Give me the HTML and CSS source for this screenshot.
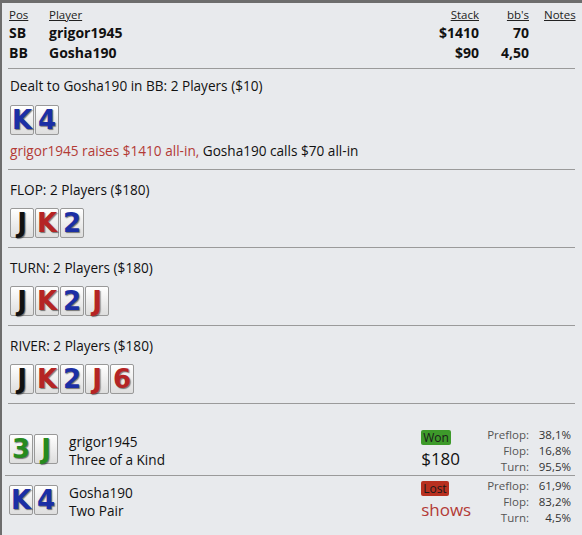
FILE: index.html
```html
<!DOCTYPE html>
<html lang="en">
<head>
    <meta charset="UTF-8">
    <title>Hand History</title>
    <link rel="stylesheet" href="styles.css">
</head>
<body>
    <div class="frame">
        <table class="players">
            <tr class="head">
                <th class="pos"><u>Pos</u></th>
                <th class="name"><u>Player</u></th>
                <th class="num"><u>Stack</u></th>
                <th class="num bbs"><u>bb's</u></th>
                <th class="notes"><u>Notes</u></th>
            </tr>
            <tr>
                <td class="pos">SB</td>
                <td class="name">grigor1945</td>
                <td class="num">$1410</td>
                <td class="num bbs">70</td>
                <td class="notes"></td>
            </tr>
            <tr>
                <td class="pos">BB</td>
                <td class="name">Gosha190</td>
                <td class="num">$90</td>
                <td class="num bbs">4,50</td>
                <td class="notes"></td>
            </tr>
        </table>

        <div class="street preflop">
            <div class="title">Dealt to Gosha190 in BB: 2 Players ($10)</div>
            <div class="cards">
                <span class="card blue">K</span><span class="card blue">4</span>
            </div>
            <div class="action"><span class="raise">grigor1945 raises $1410 all-in,</span> Gosha190 calls $70 all-in</div>
        </div>

        <div class="street">
            <div class="title">FLOP: 2 Players ($180)</div>
            <div class="cards">
                <span class="card black">J</span><span class="card red">K</span><span class="card blue">2</span>
            </div>
        </div>

        <div class="street">
            <div class="title">TURN: 2 Players ($180)</div>
            <div class="cards">
                <span class="card black">J</span><span class="card red">K</span><span class="card blue">2</span><span class="card red">J</span>
            </div>
        </div>

        <div class="street">
            <div class="title">RIVER: 2 Players ($180)</div>
            <div class="cards">
                <span class="card black">J</span><span class="card red">K</span><span class="card blue">2</span><span class="card red">J</span><span class="card red">6</span>
            </div>
        </div>

        <div class="showdown first">
            <div class="cards">
                <span class="card green">3</span><span class="card green">J</span>
            </div>
            <div class="who">
                <div>grigor1945</div>
                <div>Three of a Kind</div>
            </div>
            <div class="result">
                <span class="badge won">Won</span>
                <div class="amount">$180</div>
            </div>
            <table class="equity">
                <tr><td>Preflop:</td><td>38,1%</td></tr>
                <tr><td>Flop:</td><td>16,8%</td></tr>
                <tr><td>Turn:</td><td>95,5%</td></tr>
            </table>
        </div>

        <div class="showdown">
            <div class="cards">
                <span class="card blue">K</span><span class="card blue">4</span>
            </div>
            <div class="who">
                <div>Gosha190</div>
                <div>Two Pair</div>
            </div>
            <div class="result">
                <span class="badge lost">Lost</span>
                <div class="amount shows">shows</div>
            </div>
            <table class="equity">
                <tr><td>Preflop:</td><td>61,9%</td></tr>
                <tr><td>Flop:</td><td>83,2%</td></tr>
                <tr><td>Turn:</td><td>4,5%</td></tr>
            </table>
        </div>
    </div>
</body>
</html>
```

FILE: styles.css
```css
body {
    margin: 0;
    font-family: 'Open Sans', 'Noto Sans', sans-serif;
    font-size: 13.6px;
    color: #111;
    background-color: #e8eaed;
}

.frame {
    height: 532px;
    border-top: 3px solid #6d6d6d;
    border-left: 2px solid #6d6d6d;
    background-color: #e8eaed;
    overflow: hidden;
}

/* player list */
.players {
    width: 567px;
    margin-left: 6px;
    border-collapse: collapse;
    table-layout: fixed;
    border-bottom: 1px solid #9a9a9a;
}

.players th {
    font-weight: normal;
    font-size: 11.5px;
    color: #222;
    padding: 4px 0 0 0;
    line-height: 16px;
}

.players td {
    font-weight: bold;
    font-size: 14px;
    line-height: 20px;
    padding: 0;
}

.players tr:last-child td {
    padding-bottom: 5px;
}

.players .pos {
    width: 40px;
    padding-left: 1px;
    text-align: left;
}

.players .name {
    text-align: left;
}

.players .num {
    width: 60px;
    text-align: right;
}

.players .bbs {
    width: 50px;
}

.players .notes {
    width: 31px;
    padding-left: 15px;
    text-align: left;
}

/* streets */
.street {
    margin: 0 7px 0 6px;
    padding: 10px 0 9px 2px;
    border-bottom: 1px solid #9a9a9a;
}

.street.preflop {
    padding-top: 7px;
    padding-bottom: 8px;
}

.title {
    line-height: 20px;
}

.cards {
    display: flex;
    gap: 1px;
    margin-top: 8px;
}

.preflop .cards {
    margin-top: 9px;
}

.card {
    width: 22px;
    height: 28px;
    border: 1px solid #999;
    border-radius: 2px;
    background: linear-gradient(#ffffff, #dedede);
    display: flex;
    align-items: center;
    justify-content: center;
    font-family: 'DejaVu Sans', 'Liberation Sans', sans-serif;
    font-weight: bold;
    font-size: 26px;
    text-shadow: 1px 1px 1px rgba(0, 0, 0, 0.5);
}

.card.blue { color: #1b2fa5; }
.card.red { color: #b52424; }
.card.black { color: #111; }
.card.green { color: #268a1e; }

.action {
    margin-top: 6px;
    line-height: 20px;
}

.raise {
    color: #b33a36;
}

/* showdown */
.showdown {
    display: flex;
    align-items: flex-start;
    margin: 0 7px 0 3px;
    padding: 2px 4px 0 4px;
}

.showdown.first {
    margin-top: 23px;
    padding-top: 0;
    border-bottom: 1px solid #9a9a9a;
}

.showdown .cards {
    margin-top: 7px;
}

.who {
    margin: 6px 0 0 11px;
    flex: 1;
    line-height: 18px;
}

.result {
    width: 66px;
    margin-top: 3px;
    display: flex;
    flex-direction: column;
    align-items: flex-start;
}

.badge {
    font-size: 12px;
    line-height: 15px;
    padding: 0 2px;
    border-radius: 2px;
    color: #1a1a1a;
}

.badge.won { background-color: #3d9a2a; }
.badge.lost { background-color: #b8301f; }

.amount {
    margin-top: 3px;
    font-size: 17px;
    line-height: 22px;
}

.amount.shows {
    color: #b33a36;
}

.equity {
    border-collapse: collapse;
    font-size: 11.5px;
    color: #555;
}

.equity td {
    text-align: right;
    line-height: 16px;
    padding: 0;
}

.equity td + td {
    color: #333;
    width: 42px;
}
```
